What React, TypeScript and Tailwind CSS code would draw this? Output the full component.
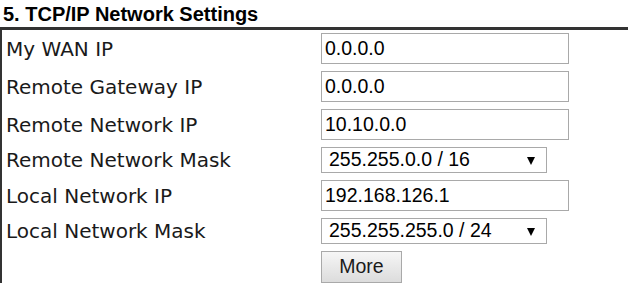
import { useState } from 'react'

type Row = {
  label: string
  kind: 'text' | 'select'
  value: string
  options?: string[]
}

const rows: Row[] = [
  { label: 'My WAN IP', kind: 'text', value: '0.0.0.0' },
  { label: 'Remote Gateway IP', kind: 'text', value: '0.0.0.0' },
  { label: 'Remote Network IP', kind: 'text', value: '10.10.0.0' },
  {
    label: 'Remote Network Mask',
    kind: 'select',
    value: '255.255.0.0 / 16',
    options: ['255.255.0.0 / 16', '255.255.255.0 / 24'],
  },
  { label: 'Local Network IP', kind: 'text', value: '192.168.126.1' },
  {
    label: 'Local Network Mask',
    kind: 'select',
    value: '255.255.255.0 / 24',
    options: ['255.255.0.0 / 16', '255.255.255.0 / 24'],
  },
]

const labelFont = "font-['DejaVu_Sans',Verdana,sans-serif]"
const fieldFont = "font-['Liberation_Sans',Arial,sans-serif]"

const Field = ({ row }: { row: Row }) => {
  const [value, setValue] = useState(row.value)

  if (row.kind === 'select') {
    return (
      <div className="relative w-[226px] h-[26px]">
        <select
          value={value}
          onChange={(e) => setValue(e.target.value)}
          className={`${fieldFont} appearance-none w-full h-full border border-[#a9a9a9] bg-white pl-[7px] text-[19.5px] leading-none text-black outline-none`}
        >
          {row.options?.map((o) => (
            <option key={o}>{o}</option>
          ))}
        </select>
        <svg
          className="absolute right-[12px] top-[10px] pointer-events-none"
          width="8"
          height="8"
          viewBox="0 0 8 8"
        >
          <path d="M0 0h8L4 8z" fill="#000" />
        </svg>
      </div>
    )
  }

  return (
    <input
      value={value}
      onChange={(e) => setValue(e.target.value)}
      className={`${fieldFont} w-[248px] h-[31px] border border-[#a9a9a9] bg-white px-[3px] text-[19.5px] text-black outline-none`}
    />
  )
}

export default function App() {
  return (
    <div className="w-[628px] h-[283px] overflow-hidden bg-white">
      <div
        className={`${fieldFont} h-[27px] pl-[3px] pt-[3px] text-[20px] leading-[22px] font-bold text-black`}
      >
        5. TCP/IP Network Settings
      </div>
      <div className="border-t-[3px] border-l-2 border-[#333] pt-[3px] flex flex-col gap-[7px]">
        {rows.map((row) => (
          <div key={row.label} className="flex items-center">
            <div
              className={`${labelFont} w-[319px] pl-[4px] text-[20px] leading-none text-[#1a1a1a]`}
            >
              {row.label}
            </div>
            <Field row={row} />
          </div>
        ))}
        <div className="flex">
          <div className="w-[319px]" />
          <button
            className={`${fieldFont} w-[81px] h-[32px] border border-[#a9a9a9] bg-gradient-to-b from-[#f6f6f6] to-[#dcdcdc] text-[19.5px] text-[#1a1a1a]`}
          >
            More
          </button>
        </div>
      </div>
    </div>
  )
}
